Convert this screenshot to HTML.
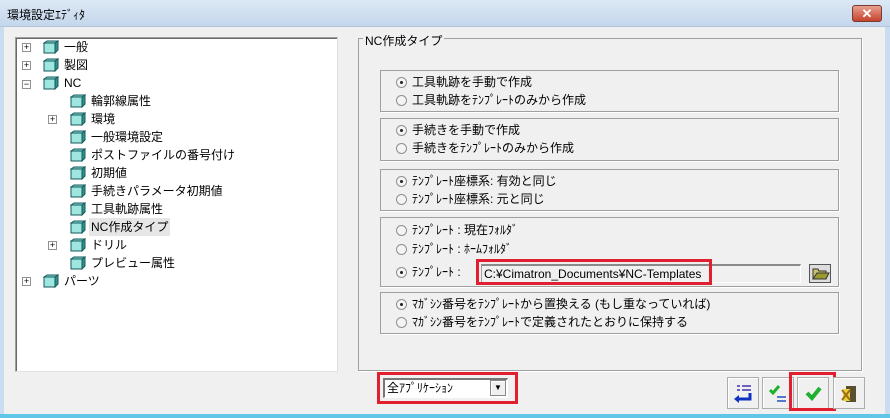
<!DOCTYPE html>
<html><head><meta charset="utf-8"><style>
*{margin:0;padding:0;box-sizing:border-box}
body{width:890px;height:418px;position:relative;overflow:hidden;background:#f0f0f0;font-family:"Liberation Sans","Noto Sans CJK JP",sans-serif;font-size:12px;color:#000}
.abs{position:absolute}
#title{left:0;top:0;width:890px;height:27px;background:linear-gradient(#dce8f5,#c4d7ec);border-bottom:1px solid #b0c6de}
#frameL{left:0;top:27px;width:4px;height:391px;background:#c9dcf0}
#frameR{right:0;top:27px;width:5px;height:391px;background:#c9dcf0}
#frameB{left:0;top:414px;width:890px;height:4px;background:#5fc6e8}
#close{left:852px;top:5px;width:30px;height:17px;border-radius:3px;background:linear-gradient(#e8a090,#c7422c);border:1px solid #7a3a30;color:#fff;font-weight:bold;text-align:center;line-height:15px;font-size:13px}
#tree{left:15px;top:37px;width:323px;height:335px;background:#fff;border:1px solid #a0a0a0;border-right-color:#e0e0e0;border-bottom-color:#e0e0e0;box-shadow:inset 1px 1px 0 #696969}
.row{position:absolute;height:18px;line-height:18px;white-space:nowrap}
.pm{position:absolute;width:9px;height:9px;border:1px solid #919191;background:#fff;font-size:9px;line-height:7px;text-align:center;color:#000}
.ic{position:absolute;width:16px;height:14px}
.sel{background:#e6e6e6;padding:0 2px}
#grp{left:358px;top:38px;width:504px;height:333px;border:1px solid #a0a0a0;box-shadow:1px 1px 0 #fff}
#grpt{left:363px;top:32px;background:#f0f0f0;padding:0 2px}
.box{position:absolute;left:380px;width:459px;border:1px solid #a0a0a0;box-shadow:1px 1px 0 #fff}
.rad{position:absolute;left:396px;width:11px;height:11px;border-radius:50%;border:1px solid #8f8f8f;background:#f4f4f4}
.rad.on::after{content:"";position:absolute;left:3px;top:3px;width:3px;height:3px;border-radius:50%;background:#222}
.lbl{position:absolute;left:412px;white-space:nowrap;line-height:14px}
.red{position:absolute;border:3px solid #e02030}
.btn{position:absolute;top:377px;width:32px;height:32px;border:1px solid #adadad;background:#f0f0f0;box-shadow:inset 1px 1px 0 #fff}
</style></head><body>
<div id="title" class="abs"></div>
<div class="abs" style="left:7px;top:6px;font-size:12px">環境設定ｴﾃﾞｨﾀ</div>
<div id="close" class="abs">✕</div>
<div id="frameL" class="abs"></div><div id="frameR" class="abs"></div><div id="frameB" class="abs"></div>

<div id="tree" class="abs"></div>
<svg width="0" height="0" style="position:absolute"><defs><symbol id="bx" viewBox="0 0 16 14"><path d="M1 3 L4 1 L15 1 L12 3 Z" fill="#7fd8d8" stroke="#1a5a5a"/><path d="M1 3 L1 13 L12 13 L12 3 Z" fill="#9fe6e0" stroke="#1a5a5a"/><path d="M12 3 L15 1 L15 10 L12 13 Z" fill="#2f9090" stroke="#1a5a5a"/></symbol></defs></svg>
<div class="pm" style="left:22px;top:43px">+</div><svg class="ic" style="left:43px;top:40px"><use href="#bx"/></svg><div class="row" style="left:64px;top:38px">一般</div>
<div class="pm" style="left:22px;top:61px">+</div><svg class="ic" style="left:43px;top:58px"><use href="#bx"/></svg><div class="row" style="left:64px;top:56px">製図</div>
<div class="pm" style="left:22px;top:80px">−</div><svg class="ic" style="left:43px;top:76px"><use href="#bx"/></svg><div class="row" style="left:64px;top:74px">NC</div>
<svg class="ic" style="left:70px;top:94px"><use href="#bx"/></svg><div class="row" style="left:91px;top:92px">輪郭線属性</div>
<div class="pm" style="left:48px;top:115px">+</div><svg class="ic" style="left:70px;top:112px"><use href="#bx"/></svg><div class="row" style="left:91px;top:110px">環境</div>
<svg class="ic" style="left:70px;top:130px"><use href="#bx"/></svg><div class="row" style="left:91px;top:128px">一般環境設定</div>
<svg class="ic" style="left:70px;top:148px"><use href="#bx"/></svg><div class="row" style="left:91px;top:146px">ポストファイルの番号付け</div>
<svg class="ic" style="left:70px;top:166px"><use href="#bx"/></svg><div class="row" style="left:91px;top:164px">初期値</div>
<svg class="ic" style="left:70px;top:184px"><use href="#bx"/></svg><div class="row" style="left:91px;top:182px">手続きパラメータ初期値</div>
<svg class="ic" style="left:70px;top:202px"><use href="#bx"/></svg><div class="row" style="left:91px;top:200px">工具軌跡属性</div>
<svg class="ic" style="left:70px;top:220px"><use href="#bx"/></svg><div class="row sel" style="left:89px;top:218px">NC作成タイプ</div>
<div class="pm" style="left:48px;top:241px">+</div><svg class="ic" style="left:70px;top:238px"><use href="#bx"/></svg><div class="row" style="left:91px;top:236px">ドリル</div>
<svg class="ic" style="left:70px;top:256px"><use href="#bx"/></svg><div class="row" style="left:91px;top:254px">プレビュー属性</div>
<div class="pm" style="left:22px;top:277px">+</div><svg class="ic" style="left:43px;top:274px"><use href="#bx"/></svg><div class="row" style="left:64px;top:272px">パーツ</div>

<div id="grp" class="abs"></div>
<div id="grpt" class="abs">NC作成タイプ</div>

<div class="box" style="top:70px;height:42px"></div>
<div class="rad on" style="top:77px"></div><div class="lbl" style="top:75px">工具軌跡を手動で作成</div>
<div class="rad" style="top:95px"></div><div class="lbl" style="top:93px">工具軌跡をﾃﾝﾌﾟﾚｰﾄのみから作成</div>

<div class="box" style="top:118px;height:43px"></div>
<div class="rad on" style="top:125px"></div><div class="lbl" style="top:123px">手続きを手動で作成</div>
<div class="rad" style="top:143px"></div><div class="lbl" style="top:141px">手続きをﾃﾝﾌﾟﾚｰﾄのみから作成</div>

<div class="box" style="top:169px;height:42px"></div>
<div class="rad on" style="top:176px"></div><div class="lbl" style="top:174px">ﾃﾝﾌﾟﾚｰﾄ座標系: 有効と同じ</div>
<div class="rad" style="top:194px"></div><div class="lbl" style="top:192px">ﾃﾝﾌﾟﾚｰﾄ座標系: 元と同じ</div>

<div class="box" style="top:217px;height:70px"></div>
<div class="rad" style="top:225px"></div><div class="lbl" style="top:223px">ﾃﾝﾌﾟﾚｰﾄ : 現在ﾌｫﾙﾀﾞ</div>
<div class="rad" style="top:244px"></div><div class="lbl" style="top:242px">ﾃﾝﾌﾟﾚｰﾄ : ﾎｰﾑﾌｫﾙﾀﾞ</div>
<div class="rad on" style="top:267px"></div><div class="lbl" style="top:265px">ﾃﾝﾌﾟﾚｰﾄ :</div>
<div class="abs" style="left:481px;top:264px;width:320px;height:19px;border-top:2px solid #8a8a8a;border-left:1px solid #a0a0a0;border-bottom:1px solid #fff;border-right:1px solid #fff;background:#f0f0f0;padding-left:2px;line-height:16px">C:¥Cimatron_Documents¥NC-Templates</div>
<div class="red" style="left:476px;top:259px;width:236px;height:26px"></div>
<div class="abs" style="left:809px;top:264px;width:22px;height:19px;border:1px solid #555;background:#ddd">
<svg width="20" height="17"><path d="M3 4 L8 4 L9 6 L16 6 L16 14 L3 14 Z" fill="#c8c26a" stroke="#333"/><path d="M3 14 L7 8 L19 8 L16 14 Z" fill="#9a9a30" stroke="#333"/></svg></div>

<div class="box" style="top:292px;height:42px"></div>
<div class="rad on" style="top:299px"></div><div class="lbl" style="top:297px">ﾏｶﾞｼﾝ番号をﾃﾝﾌﾟﾚｰﾄから置換える (もし重なっていれば)</div>
<div class="rad" style="top:317px"></div><div class="lbl" style="top:315px">ﾏｶﾞｼﾝ番号をﾃﾝﾌﾟﾚｰﾄで定義されたとおりに保持する</div>

<div class="abs" style="left:383px;top:378px;width:125px;height:20px;border-top:2px solid #777;border-left:2px solid #777;border-right:1px solid #fff;border-bottom:1px solid #fff;background:#fff;padding-left:2px;line-height:16px">全ｱﾌﾟﾘｹｰｼｮﾝ</div>
<div class="abs" style="left:490px;top:380px;width:16px;height:16px;background:#f0f0f0;border:1px solid #888;box-shadow:inset 1px 1px 0 #fff;font-size:8px;text-align:center;line-height:14px">▼</div>
<div class="red" style="left:377px;top:372px;width:141px;height:32px"></div>

<div class="btn" style="left:727px"><svg width="30" height="30"><path d="M9 8h3M14 8h9M9 12h3M14 12h9" stroke="#7060c0" stroke-width="2"/><path d="M22 15 v6 H10" stroke="#1030c0" stroke-width="3" fill="none"/><path d="M6 21 L11 17 L11 25 Z" fill="#1030c0"/></svg></div>
<div class="btn" style="left:762px"><svg width="30" height="30"><path d="M7 12 L10 15 L16 8" stroke="#20b030" stroke-width="3" fill="none"/><path d="M14 19h9M14 23h9" stroke="#2050c0" stroke-width="1.5"/></svg></div>
<div class="btn" style="left:797px"><svg width="30" height="30"><path d="M9 15 L14 20 L22 10" stroke="#20b030" stroke-width="4" fill="none"/></svg></div>
<div class="red" style="left:789px;top:372px;width:47px;height:39px"></div>
<div class="btn" style="left:833px"><svg width="30" height="30"><path d="M12 8h10v16h-10z" fill="#5a5030"/><path d="M9 11h7v12h-7z" fill="#e8d040"/><path d="M8 12 L16 22 M16 12 L8 22" stroke="#a07010" stroke-width="2"/></svg></div>
</body></html>
